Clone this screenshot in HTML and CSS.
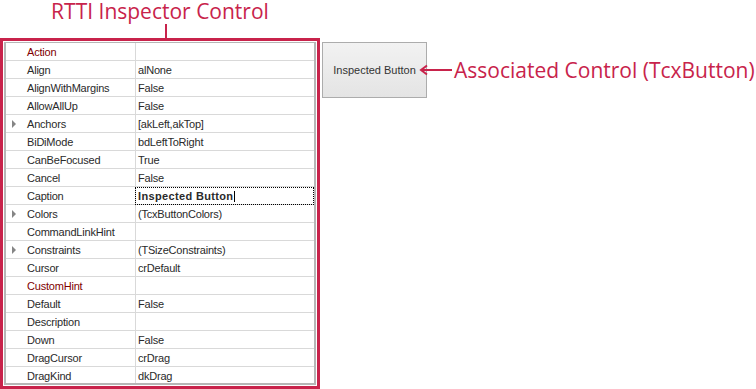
FILE: index.html
```html
<!DOCTYPE html>
<html>
<head>
<meta charset="utf-8">
<link rel="stylesheet" href="styles.css">
</head>
<body>
<div class="page">
  <div class="inspector-col">
    <div class="title">RTTI Inspector Control</div>
    <div class="connector"></div>
    <div class="frame">
      <div class="grid">
        <div class="row"><div class="name special"><span class="gutter"></span>Action</div><div class="value"></div></div>
        <div class="row"><div class="name"><span class="gutter"></span>Align</div><div class="value">alNone</div></div>
        <div class="row"><div class="name"><span class="gutter"></span>AlignWithMargins</div><div class="value">False</div></div>
        <div class="row"><div class="name"><span class="gutter"></span>AllowAllUp</div><div class="value">False</div></div>
        <div class="row"><div class="name"><span class="gutter"><i class="tri"></i></span>Anchors</div><div class="value">[akLeft,akTop]</div></div>
        <div class="row"><div class="name"><span class="gutter"></span>BiDiMode</div><div class="value">bdLeftToRight</div></div>
        <div class="row"><div class="name"><span class="gutter"></span>CanBeFocused</div><div class="value">True</div></div>
        <div class="row"><div class="name"><span class="gutter"></span>Cancel</div><div class="value">False</div></div>
        <div class="row"><div class="name"><span class="gutter"></span>Caption</div><div class="value focused"><b class="edit">Inspected Button</b><span class="caret"></span></div></div>
        <div class="row"><div class="name"><span class="gutter"><i class="tri"></i></span>Colors</div><div class="value">(TcxButtonColors)</div></div>
        <div class="row"><div class="name"><span class="gutter"></span>CommandLinkHint</div><div class="value"></div></div>
        <div class="row"><div class="name"><span class="gutter"><i class="tri"></i></span>Constraints</div><div class="value">(TSizeConstraints)</div></div>
        <div class="row"><div class="name"><span class="gutter"></span>Cursor</div><div class="value">crDefault</div></div>
        <div class="row"><div class="name special"><span class="gutter"></span>CustomHint</div><div class="value"></div></div>
        <div class="row"><div class="name"><span class="gutter"></span>Default</div><div class="value">False</div></div>
        <div class="row"><div class="name"><span class="gutter"></span>Description</div><div class="value"></div></div>
        <div class="row"><div class="name"><span class="gutter"></span>Down</div><div class="value">False</div></div>
        <div class="row"><div class="name"><span class="gutter"></span>DragCursor</div><div class="value">crDrag</div></div>
        <div class="row"><div class="name"><span class="gutter"></span>DragKind</div><div class="value">dkDrag</div></div>
      </div>
    </div>
  </div>
  <div class="assoc">
    <div class="button">Inspected Button</div>
    <svg class="arrow" viewBox="0 0 34 12" width="34" height="12">
      <path d="M2 6 H33" stroke="#c8234b" stroke-width="2" fill="none"/>
      <path d="M8 1.5 L2 6 L8 10.5" stroke="#c8234b" stroke-width="2" fill="none" stroke-linejoin="miter"/>
    </svg>
    <div class="label">Associated Control (TcxButton)</div>
  </div>
</div>
</body>
</html>
```
FILE: styles.css
```css
body {
  margin: 0;
  background: #fff;
  font-family: "Liberation Sans", Arial, sans-serif;
}
.page {
  display: flex;
  align-items: flex-start;
}
.inspector-col {
  width: 320px;
  display: flex;
  flex-direction: column;
}
.title {
  font-family: "Open Sans", sans-serif;
  font-size: 21px;
  line-height: 22px;
  color: #c8234b;
  text-align: center;
  margin-bottom: 2px;
  white-space: nowrap;
}
.connector {
  width: 2px;
  height: 14px;
  background: #c8234b;
  margin-left: 165px;
}
.frame {
  border: 3px solid #c8234b;
  padding: 1px;
}
.grid {
  border: 2px solid #b6b6b6;
  border-top-width: 1px;
  height: 340px;
  overflow: hidden;
}
.row {
  display: grid;
  grid-template-columns: 129px 1fr;
  height: 18px;
  box-sizing: border-box;
  border-bottom: 1px solid #d9d9d9;
  padding-top: 1px;
  font-size: 11px;
  line-height: 16px;
  color: #2a2a2a;
  letter-spacing: -0.2px;
}
.name {
  display: flex;
  align-items: center;
  white-space: nowrap;
}
.name.special {
  color: #800000;
}
.gutter {
  width: 21px;
  flex: none;
  display: flex;
  align-items: center;
  padding-left: 6px;
  box-sizing: border-box;
  align-self: stretch;
}
.tri {
  display: block;
  width: 0;
  height: 0;
  border-left: 4px solid #858585;
  border-top: 4px solid transparent;
  border-bottom: 4px solid transparent;
}
.value {
  border-left: 1px solid #d9d9d9;
  padding-left: 2px;
  position: relative;
  white-space: nowrap;
  margin-top: -1px;
  padding-top: 1px;
}
.value.focused::after {
  content: "";
  position: absolute;
  left: -1px;
  top: 0;
  right: 0;
  bottom: -1px;
  border: 1px dotted #000;
}
.edit {
  font-weight: bold;
  letter-spacing: 0.35px;
  color: #2a2a2a;
}
.caret {
  display: inline-block;
  width: 1px;
  height: 11px;
  background: #000;
  vertical-align: -2px;
  margin-left: 1px;
}
.assoc {
  display: flex;
  align-items: center;
  margin-top: 42px;
  margin-left: 2px;
}
.button {
  width: 105px;
  height: 56px;
  box-sizing: border-box;
  border: 1px solid #acacac;
  background: linear-gradient(#f2f2f2, #e4e4e4);
  display: flex;
  align-items: center;
  justify-content: center;
  font-size: 11px;
  color: #333;
  white-space: nowrap;
}
.arrow {
  display: block;
  flex: none;
  margin-left: -8px;
}
.label {
  font-family: "Open Sans", sans-serif;
  font-size: 21px;
  line-height: 22px;
  color: #c8234b;
  margin-left: 1px;
  white-space: nowrap;
}
```
